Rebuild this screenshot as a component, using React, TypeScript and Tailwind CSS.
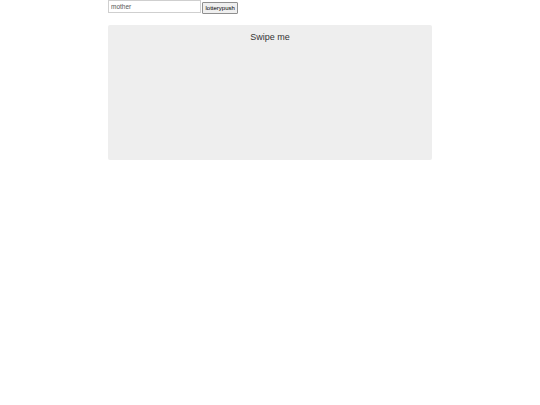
import React from 'react';

const App: React.FC = () => {
	return (
		<div className="min-h-[405px] bg-white font-['Liberation_Sans',Arial,sans-serif]">
			<div className="mx-auto w-[324px]">
				<div className="flex items-start gap-px">
					<input
						defaultValue="mother"
						className="h-[13px] w-[93px] border border-[#cfcfcf] bg-white px-[2px] text-[6.5px] text-[#555] outline-none"
					/>
					<button className="mt-[2px] h-[12px] rounded-[1px] border border-[#8f8f8f] bg-[#efefef] px-[2.5px] text-[6px] leading-none text-black">
						lotterypush
					</button>
				</div>
				<div className="mt-[11px] h-[135px] rounded-[2px] bg-[#eeeeee] pt-[7px] text-center text-[9px] leading-[11px] text-[#333]">
					Swipe me
				</div>
			</div>
		</div>
	);
};

export default App;
